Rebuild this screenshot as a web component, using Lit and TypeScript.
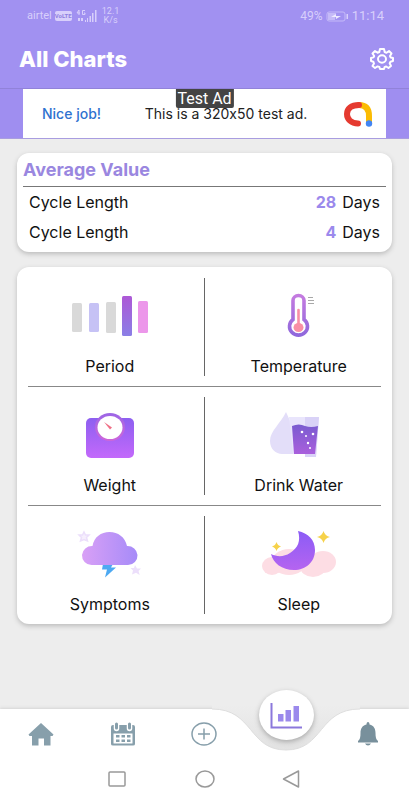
import { LitElement, html, css, svg } from "lit";
import { customElement } from "lit/decorators.js";

const periodIcon = svg`<svg class="art" viewBox="0 0 80 44" width="80" height="44" aria-hidden="true">
  <defs><linearGradient id="bar" x1="0" y1="0" x2="0" y2="1"><stop offset="0" stop-color="#ad58d6"/><stop offset="1" stop-color="#8b7fe6"/></linearGradient></defs>
  <rect x="2" y="9" width="10" height="29" rx="1.500" fill="#d9d9d9"/>
  <rect x="19" y="9" width="10" height="29" rx="1.500" fill="#c6c2f5"/>
  <rect x="36" y="8" width="10" height="31" rx="1.500" fill="#d9d9d9"/>
  <rect x="52" y="2" width="10" height="40" rx="1.500" fill="url(#bar)"/>
  <rect x="68" y="7" width="10" height="32" rx="1.500" fill="#ec97ea"/>
</svg>`;

const temperatureIcon = svg`<svg class="art" viewBox="0 0 60 48" width="60" height="48" aria-hidden="true">
  <defs><linearGradient id="tube" x1="0" y1="0" x2="0" y2="1"><stop offset="0" stop-color="#c47be0"/><stop offset="1" stop-color="#9068dc"/></linearGradient></defs>
  <path d="M24 8.500a5.500 5 0 0 1 11 0V27.500a9 8.700 0 1 1-11 0Z" fill="#fff" stroke="url(#tube)" stroke-width="3.600"/>
  <path d="M29.500 18v18" stroke="#f98fa5" stroke-width="2.600" stroke-linecap="round"/>
  <ellipse cx="29.500" cy="35.500" rx="5" ry="4.600" fill="#f98fa5"/>
  <path d="M39 5.500h5M39 8.500h6M39 11.500h6" stroke="#a8a8a8" stroke-width="1"/>
</svg>`;

const weightIcon = svg`<svg class="art" viewBox="0 0 50 48" width="50" height="48" aria-hidden="true">
  <defs>
    <linearGradient id="scale" x1="0" y1="0" x2="0" y2="1"><stop offset="0" stop-color="#8d5ff0"/><stop offset="1" stop-color="#c369fb"/></linearGradient>
    <linearGradient id="dial" x1="0" y1="0" x2="0" y2="1"><stop offset="0" stop-color="#9c66e6"/><stop offset="1" stop-color="#cf66d8"/></linearGradient>
  </defs>
  <rect x="1" y="7" width="48" height="40" rx="5" fill="url(#scale)"/>
  <ellipse cx="25" cy="16" rx="15" ry="14" fill="url(#dial)"/>
  <ellipse cx="25" cy="16.500" rx="12.500" ry="11.500" fill="#fff"/>
  <path d="M19 11l8 5.500-2 2z" fill="#ef6f86"/>
</svg>`;

const waterIcon = svg`<svg class="art" viewBox="0 0 60 48" width="60" height="48" aria-hidden="true">
  <defs><linearGradient id="water" x1="0" y1="0" x2="0" y2="1"><stop offset="0" stop-color="#7a5cd0"/><stop offset="1" stop-color="#a95fdc"/></linearGradient></defs>
  <path d="M17 1C12 12 1 20 1 30c0 8 6 13 12 13h13V12h-4Z" fill="#e3def9"/>
  <path d="M20 6h30l-3 40H36V43H24Z" fill="#e9e5fc"/>
  <path d="M36 6h14l-3 40H36Z" fill="#d9d2f7"/>
  <path d="M23 15q7-3 13 0 6 2 13 0l-3 28H25Z" fill="url(#water)"/>
  <g fill="#fff"><circle cx="33" cy="21" r="1.300"/><circle cx="44" cy="23" r="1.300"/><circle cx="37" cy="25" r="1"/><circle cx="39" cy="32" r="1.200"/><circle cx="41" cy="37" r="1"/></g>
</svg>`;

const symptomsIcon = svg`<svg class="art" viewBox="0 0 66 50" width="66" height="50" aria-hidden="true">
  <defs><linearGradient id="cloud" x1="0" y1="0" x2="1" y2="0"><stop offset="0" stop-color="#d9a0f6"/><stop offset="1" stop-color="#a68bf8"/></linearGradient></defs>
  <path d="M7 3l1.500 3h3.500L9.500 8.500l1 3.500L7 10.500 3.500 12 4.500 8.500 2 6H5.500Z" fill="#f6effd" stroke="#ecdffb" stroke-width="1.500"/>
  <path d="M58 36l2 3.500h4L61.500 42l1.200 4L59 43.800 55 45.500 56 41.500 53.500 39H57Z" fill="#ecdffb"/>
  <path d="M26 35h10l-2 3.500h5L28 48.500l2-8h-5Z" fill="#4da9f2"/>
  <path d="M14.500 36A10 9.500 0 0 1 15.500 17C17 8 24 3 32.500 3S48 8 50 17A10 9.500 0 0 1 51 36Z" fill="url(#cloud)"/>
</svg>`;

const sleepIcon = svg`<svg class="art" viewBox="0 0 76 50" width="76" height="50" aria-hidden="true">
  <defs><linearGradient id="moon" x1="0" y1="0" x2="0" y2="1"><stop offset="0" stop-color="#8b5cf6"/><stop offset="1" stop-color="#b564f0"/></linearGradient></defs>
  <g fill="#fddde4"><ellipse cx="11" cy="37" rx="10" ry="9"/><ellipse cx="28" cy="33" rx="17" ry="13"/><ellipse cx="62" cy="33" rx="13" ry="11"/><ellipse cx="52" cy="38" rx="13" ry="10"/></g>
  <path d="M37 2C47 4 54 11 54 21 54 33 45 41 33 41 21 41 12 34 10 25c6 3 13 3 19-1 8-5 11-12 8-22Z" fill="url(#moon)"/>
  <path d="M62.500 2q1.500 5 6.500 6-5 1-6.500 6-1.500-5-6.500-6 5-1 6.500-6ZM15.500 13q1 3.500 4.500 4.500-3.500 1-4.500 4.500-1-3.500-4.500-4.500 3.500-1 4.500-4.500Z" fill="#f6d24a"/>
</svg>`;

const charts = [
  [
    { name: "Period", icon: periodIcon },
    { name: "Temperature", icon: temperatureIcon },
  ],
  [
    { name: "Weight", icon: weightIcon },
    { name: "Drink Water", icon: waterIcon },
  ],
  [
    { name: "Symptoms", icon: symptomsIcon },
    { name: "Sleep", icon: sleepIcon },
  ],
];

const averages = [
  { label: "Cycle Length", value: 28 },
  { label: "Cycle Length", value: 4 },
];

@customElement("status-bar")
export class StatusBar extends LitElement {
  static styles = css`
    :host { display: flex; justify-content: space-between; padding: 6px 25px 0 27px; height: 26px; box-sizing: border-box; font: 11px/20px Roboto, sans-serif; color: #d8cffb; }
    .side { display: flex; align-items: center; gap: 3px; }
    .volte { background: #d8cffb; color: #8f7fe0; border-radius: 2px; font-size: 6px; line-height: 10px; font-weight: 700; width: 17px; text-align: center; }
    .rate { font-size: 9px; line-height: 9px; text-align: center; }
    .right { font-size: 12px; }
    .time { font-size: 13px; }
  `;
  render() {
    return html`
      <div class="side">
        <span>airtel</span><span class="volte">VoLTE</span>
        <svg width="24" height="14" viewBox="0 0 24 14" fill="#d8cffb" aria-hidden="true">
          <path d="M4 1 2 4h3M4 1v5M10 1.500H7.500v4H10V4H9" fill="none" stroke="#d8cffb"/>
          <path d="M3 9h2v3H3zM6 9h2v3H6zM10 11h1v2h-1zM12 9h1v4h-1zM14.500 7H16v6h-1.500zM17 4h1.500v9H17zM20 1h1.500v12H20z"/>
        </svg>
        <span class="rate">12.1<br />K/s</span>
      </div>
      <div class="side right">
        <span>49%</span>
        <svg width="23" height="11" viewBox="0 0 23 11" aria-hidden="true">
          <rect x="1" y="1" width="18" height="9" rx="2" fill="none" stroke="#c5baf8"/>
          <path d="M2 2h8l-1 7H2z" fill="#c5baf8"/><path d="M5 6l5-3v2h5l-5 3V6z" fill="#eee9ff"/><path d="M20.500 3H22v5h-1.500z" fill="#d8cffb"/>
        </svg>
        <span class="time">11:14</span>
      </div>
    `;
  }
}

@customElement("tab-bar")
export class TabBar extends LitElement {
  static styles = css`
    :host { display: block; background: #fff; box-shadow: 0 -1px 3px #d4d4d4; }
    .tabs { display: flex; height: 50px; }
    .tab { flex: 1; min-width: 0; border: 0; padding: 0; background: none; display: grid; place-items: center; position: relative; cursor: pointer; }
    .notch { position: absolute; top: -4px; left: 50%; transform: translateX(-50%); }
    .bubble { position: absolute; top: -19px; width: 55px; height: 50px; border-radius: 50%; background: #fff; box-shadow: 0 2px 5px #aaa; display: grid; place-items: center; }
    .system { display: flex; justify-content: center; gap: 67px; padding: 10px 0 11px; }
    .key { border: 0; padding: 0; background: none; width: 20px; height: 20px; cursor: pointer; }
    .key svg { display: block; }
  `;
  render() {
    return html`
      <nav class="tabs" aria-label="Main">
        <button class="tab" aria-label="Home">
          <svg width="26" height="24" viewBox="0 0 26 24" fill="#879fab"><path d="M13 1 25.500 12.500 24.500 14H22.500v9.500H16v-7h-5.500v7H4V14H1.500L.5 12.500Z"/></svg>
        </button>
        <button class="tab" aria-label="Calendar">
          <svg width="26" height="24" viewBox="0 0 26 24">
            <path d="M3 3h20q2 0 2 2v17q0 1.500-2 1.500H3q-2 0-2-1.500V5q0-2 2-2Z" fill="#879fab"/>
            <path d="M3.500 11.500h19V21.500h-19Z" fill="#fff"/>
            <path d="M6.500 1v5.500M19.500 1v5.500" stroke="#fff" stroke-width="5.500" stroke-linecap="round"/>
            <path d="M6.500 2v4M19.500 2v4" stroke="#879fab" stroke-width="3" stroke-linecap="round"/>
            <path d="M6 13h3.500v2.500H6zM11.500 13H15v2.500h-3.500zM17 13h3.500v2.500H17zM6 17.500h3.500V20H6zM11.500 17.500H15V20h-3.500zM17 17.500h3.500V20H17z" fill="#879fab"/>
          </svg>
        </button>
        <button class="tab" aria-label="Add">
          <svg width="26" height="24" viewBox="0 0 26 24" fill="none" stroke="#879fab" stroke-width="1.500"><ellipse cx="13" cy="12" rx="12" ry="11"/><path d="M13 6.500v11M7 12h12"/></svg>
        </button>
        <button class="tab" aria-label="Charts" aria-current="page">
          <svg class="notch" width="148" height="47" viewBox="0 0 148 47">
            <defs><linearGradient id="well" x1="0" y1="0" x2="0" y2="1"><stop offset="0" stop-color="#ededed"/><stop offset="1" stop-color="#e2e2e2"/></linearGradient></defs>
            <path d="M0 0V4C42 4 36 45 74 45S106 4 148 4V0Z" fill="url(#well)"/>
            <path d="M0 4C42 4 36 45 74 45S106 4 148 4" fill="none" stroke="#dedede"/>
          </svg>
          <span class="bubble">
            <svg width="32" height="27" viewBox="0 0 32 27" fill="none"><path d="M1.500 1v24.500H32" stroke="#8b78dc" stroke-width="2"/><path d="M8 12h5.500v7.500H8zM15.500 8H21v11.500h-5.500zM23.500 4H29v15.500h-5.500z" fill="#9b89ec"/></svg>
          </span>
        </button>
        <button class="tab" aria-label="Notifications">
          <svg width="22" height="24" viewBox="0 0 22 24" fill="#78909c"><path d="M11 0c1 0 1.500 1 1.500 2.500C17 3.500 18.500 7 18.500 11c0 4 .5 6.500 2.500 8v1.500H1V19c2-1.500 2.500-4 2.500-8 0-4 1.500-7.500 6-8.500C9.500 1 10 0 11 0ZM8 21.500h6q-1 2-3 2t-3-2Z"/></svg>
        </button>
      </nav>
      <div class="system">
        <button class="key" aria-label="Recent apps"><svg width="20" height="20" viewBox="0 0 20 20" fill="none" stroke="#999" stroke-width="1.500"><rect x="1" y="3" width="16" height="14" rx="1"/></svg></button>
        <button class="key" aria-label="Home screen"><svg width="20" height="20" viewBox="0 0 20 20" fill="none" stroke="#999" stroke-width="1.500"><ellipse cx="10" cy="10" rx="9" ry="8"/></svg></button>
        <button class="key" aria-label="Back"><svg width="20" height="20" viewBox="0 0 20 20" fill="none" stroke="#999" stroke-width="1.500" stroke-linejoin="round"><path d="M16.500 2v16L1.500 10Z"/></svg></button>
      </div>
    `;
  }
}

@customElement("app-root")
export class AppRoot extends LitElement {
  static styles = css`
    :host { display: flex; flex-direction: column; min-height: 100vh; background: #ededed; font-family: Inter, "Open Sans", sans-serif; font-feature-settings: "calt" 0; color: #111; }
    .top { background: #a191f1; }
    .bar { display: flex; align-items: center; justify-content: space-between; height: 62px; box-sizing: border-box; padding: 8px 15px 4px 19px; }
    h1 { margin: 0; font-size: 22px; line-height: 28px; font-weight: 800; color: #fff; }
    .settings { border: 0; padding: 0; background: none; cursor: pointer; }
    .settings svg { display: block; }
    .strip { background: #9f8ef0; border-top: 1px solid #9182d9; border-bottom: 1px solid #a99de0; padding: 0 23px; box-sizing: border-box; height: 51px; display: flex; }
    .ad { flex: 1; display: flex; align-items: center; justify-content: space-between; background: #fff; padding: 0 13px 0 19px; position: relative; font-size: 14px; line-height: 20px; color: #222; text-decoration: none; }
    .praise { color: #2f72d0; font-weight: 500; }
    .message { margin-left: 8px; }
    .logo { display: flex; }
    .tag { position: absolute; top: 0; left: 50%; transform: translateX(-50%); background: #444; color: #fff; font: 16px/19px Roboto, sans-serif; padding: 0 2px; border-radius: 0 0 2px 2px; white-space: nowrap; }
    main { flex: 1; display: flex; flex-direction: column; gap: 15px; padding: 14px 17px 24px; }
    .card { background: #fff; border-radius: 12px; box-shadow: 0 2px 5px #bbb; }
    .average { padding: 4px 6px 5px; }
    h2 { margin: 0; padding-bottom: 4px; font-size: 18px; line-height: 25px; font-weight: 700; color: #9a87e0; border-bottom: 1px solid #777; }
    dl { margin: 0; }
    .row { display: flex; justify-content: space-between; padding: 0 6px; font-size: 16px; line-height: 30px; }
    dd { margin: 0; }
    .value { color: #9b89ec; font-weight: 700; margin-right: 6px; }
    .grid { padding: 1px 11px 0; }
    .pair { display: grid; grid-template-columns: 1fr 1fr; padding: 10px 0; border-bottom: 1px solid #888; }
    .pair:last-child { border-bottom: 0; }
    .chart { border: 0; background: none; padding: 0; height: 98px; display: flex; flex-direction: column; align-items: center; justify-content: flex-end; gap: 10px; font: inherit; font-size: 16px; line-height: 20px; color: #111; cursor: pointer; }
    .chart:first-child { border-right: 1px solid #666; padding-right: 12px; }
    .chart:last-child { padding-left: 12px; }
    .pic { height: 60px; display: grid; place-items: center; }
    .art { display: block; }
  `;
  render() {
    return html`
      <header class="top">
        <status-bar></status-bar>
        <div class="bar">
          <h1>All Charts</h1>
          <button class="settings" aria-label="Settings">
            <svg width="24" height="22" viewBox="0 0 24 22" fill="none" stroke="#fff" stroke-width="2" stroke-linejoin="round">
              <path d="M10 1h4l.7 3 1.800.8L19 3l2.500 2.500L20 8l.7 1.500 2.300.5v3l-2.500.7-.8 1.600L21 18l-2.500 2-2.300-1.500-1.700.7L14 21h-4l-.6-2-1.800-.6L5 20l-2.500-2L4 15.500l-.7-1.800L1 13v-3l2.500-.6L4.200 8 2.500 5.500 5 3l2.500 1.700L9.300 4Z"/>
              <ellipse cx="12" cy="11" rx="4" ry="3.700"/>
            </svg>
          </button>
        </div>
      </header>
      <div class="strip">
        <a class="ad" href="#ad">
          <span class="praise">Nice job!</span>
          <span class="message">This is a 320x50 test ad.</span>
          <span class="logo">
            <svg width="30" height="28" viewBox="0 0 30 28" fill="none" stroke-width="6" stroke-linecap="round" aria-hidden="true">
              <path d="M16 5q10 0 10 11v6" stroke="#fbbc04"/><path d="M16 5C8 5 4 9 4 14s4 9.500 11 9.500" stroke="#e53a30"/><circle cx="26" cy="23.500" r="3.200" fill="#4285f4"/>
            </svg>
          </span>
          <span class="tag">Test Ad</span>
        </a>
      </div>
      <main>
        <section class="card average">
          <h2>Average Value</h2>
          <dl>
            ${averages.map((a) => html`<div class="row"><dt>${a.label}</dt><dd><span class="value">${a.value}</span>Days</dd></div>`)}
          </dl>
        </section>
        <section class="card grid">
          ${charts.map(
            (pair) => html`<div class="pair">
              ${pair.map((c) => html`<button class="chart"><span class="pic">${c.icon}</span><span>${c.name}</span></button>`)}
            </div>`
          )}
        </section>
      </main>
      <tab-bar></tab-bar>
    `;
  }
}
